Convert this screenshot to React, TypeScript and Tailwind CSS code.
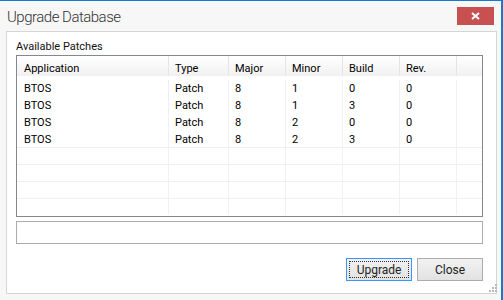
import React from 'react'

const COLUMNS = [
  { label: 'Application', width: 'w-[152px]' },
  { label: 'Type', width: 'w-[60px]' },
  { label: 'Major', width: 'w-[57px]' },
  { label: 'Minor', width: 'w-[57px]' },
  { label: 'Build', width: 'w-[57px]' },
  { label: 'Rev.', width: 'w-[57px]' },
]

const PATCHES = [
  ['BTOS', 'Patch', '8', '1', '0', '0'],
  ['BTOS', 'Patch', '8', '1', '3', '0'],
  ['BTOS', 'Patch', '8', '2', '0', '0'],
  ['BTOS', 'Patch', '8', '2', '3', '0'],
]

function Row({ cells, lined }: { cells: string[]; lined: boolean }) {
  return (
    <div className={`flex h-[17px] ${lined ? 'border-b border-[#f0f0f0]' : ''}`}>
      {COLUMNS.map((c, i) => (
        <div
          key={c.label}
          className={`${c.width} shrink-0 border-r border-[#f0f0f0] pl-[6px] leading-[17px] ${i === 0 ? 'pl-[7px]' : ''}`}
        >
          {cells[i] ?? ''}
        </div>
      ))}
      <div className="flex-1" />
    </div>
  )
}

function Button({ label, focused }: { label: string; focused?: boolean }) {
  return (
    <button
      className={`flex h-[23px] w-[66px] items-center justify-center border bg-gradient-to-b from-[#f2f2f2] to-[#e2e2e2] p-[2px] text-[12px] text-[#222] ${
        focused ? 'border-[#3399ff]' : 'border-[#acacac]'
      }`}
    >
      <span
        className={`flex h-full w-full items-center justify-center ${
          focused ? 'border border-dotted border-[#333]' : ''
        }`}
      >
        {label}
      </span>
    </button>
  )
}

export default function App() {
  return (
    <div
      className="flex h-[300px] w-[503px] flex-col border-t border-r-2 border-[#1979ca] bg-[#f7f7f7] text-black"
      style={{ fontFamily: 'Roboto, "Open Sans", sans-serif' }}
    >
      {/* Title bar */}
      <div className="flex h-[30px] shrink-0 items-start justify-between pl-[7px] pr-[7px]">
        <span className="mt-[6px] text-[15px] font-light leading-[20px] tracking-[-0.5px] text-[#333]">
          Upgrade Database
        </span>
        <button className="mt-[6px] flex h-[18px] w-[37px] items-center justify-center bg-[#c75050]">
          <svg width="9" height="8" viewBox="0 0 9 8">
            <path d="M1 1 L8 7 M8 1 L1 7" stroke="white" strokeWidth="2" />
          </svg>
        </button>
      </div>

      {/* Body */}
      <div className="flex flex-1 pl-[6px] pr-[4px] pb-[6px]">
        <div className="relative flex flex-1 flex-col border border-[#d5d5d5] bg-white pl-[9px] pr-[13px]">
          <div className="mt-[7px] h-[16px] text-[11px] leading-[16px] text-[#111]">Available Patches</div>

          {/* List view */}
          <div className="flex h-[162px] flex-col border border-[#828790] text-[11px]">
            <div className="flex h-[20px]">
              {COLUMNS.map((c, i) => (
                <div
                  key={c.label}
                  className={`${c.width} shrink-0 border-r border-[#e5e5e5] bg-gradient-to-b from-[#ffffff] to-[#f1f1f1] pl-[6px] leading-[25px] ${i === 0 ? 'pl-[7px]' : ''}`}
                >
                  {c.label}
                </div>
              ))}
              <div className="flex-1 bg-gradient-to-b from-[#ffffff] to-[#f1f1f1]" />
            </div>
            <div className="h-[4px]" />
            {PATCHES.map((p, i) => (
              <Row key={i} cells={p} lined={i === PATCHES.length - 1} />
            ))}
            {[0, 1, 2].map((i) => (
              <Row key={`e${i}`} cells={[]} lined />
            ))}
            <div className="flex h-[15px]">
              {COLUMNS.map((c) => (
                <div key={c.label} className={`${c.width} shrink-0 border-r border-[#f0f0f0]`} />
              ))}
            </div>
          </div>

          {/* Status box */}
          <div className="mt-[4px] h-[23px] border border-[#ababab] bg-white" />

          <div className="mt-[14px] flex justify-end gap-[5px]">
            <Button label="Upgrade" focused />
            <Button label="Close" />
          </div>

          {/* Resize grip */}
          <svg className="absolute bottom-[0px] right-[-1px]" width="8" height="9" viewBox="0 0 8 9">
            <rect x="6" y="0" width="2" height="2" fill="#b8b8b8" />
            <rect x="3" y="3" width="2" height="2" fill="#b8b8b8" />
            <rect x="6" y="3" width="2" height="2" fill="#b8b8b8" />
            <rect x="0" y="6" width="2" height="2" fill="#b8b8b8" />
            <rect x="3" y="6" width="2" height="2" fill="#b8b8b8" />
            <rect x="6" y="6" width="2" height="2" fill="#b8b8b8" />
          </svg>
        </div>
      </div>
    </div>
  )
}
